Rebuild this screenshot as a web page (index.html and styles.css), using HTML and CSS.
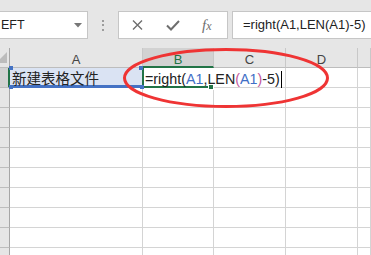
FILE: index.html
```html
<!DOCTYPE html>
<html>
<head>
<meta charset="utf-8">
<link rel="stylesheet" href="styles.css">
</head>
<body>
<div class="toolbar">
  <div class="namebox"><span>EFT</span><svg class="dd" width="8" height="5" viewBox="0 0 8 5"><polygon points="0,0 8,0 4,4.5" fill="#777"/></svg></div>
  <div class="grip"><i></i><i></i><i></i></div>
  <div class="fbtns">
    <svg class="ic-x" width="11" height="10" viewBox="0 0 11 10"><path d="M1 0.5 L10 9.5 M10 0.5 L1 9.5" stroke="#6e6e6e" stroke-width="1.4" fill="none"/></svg>
    <svg class="ic-ok" width="14" height="11" viewBox="0 0 14 11"><path d="M1 5.5 L5 9.5 L13 1" stroke="#6e6e6e" stroke-width="2" fill="none"/></svg>
    <span class="fx">f<span class="fx-x">x</span></span>
  </div>
  <div class="finput">=right(A1,LEN(A1)-5)</div>
</div>
<div class="sheet">
  <div class="corner"><svg width="9" height="19" viewBox="0 0 9 19"><polygon points="7,4 7,15 -4,15" fill="#bcbcbc"/></svg></div>
  <div class="ch">A</div><div class="ch ch-sel">B</div><div class="ch">C</div><div class="ch">D</div><div class="ch"></div>

  <div class="rh rh-sel"></div>
  <div class="cell a1">新建表格文件<span class="h h-tl"></span><span class="h h-tr"></span><span class="h h-bl"></span><span class="h h-br"></span></div>
  <div class="cell b1">=right(<span class="ref">A1</span>,LEN<span class="par">(</span><span class="ref">A1</span><span class="par">)</span>-5)<span class="caret"></span><span class="gh"></span></div>
  <div class="cell"></div><div class="cell"></div><div class="cell"></div>

  <div class="rh"></div><div class="cell"></div><div class="cell"></div><div class="cell"></div><div class="cell"></div><div class="cell"></div>
  <div class="rh"></div><div class="cell"></div><div class="cell"></div><div class="cell"></div><div class="cell"></div><div class="cell"></div>
  <div class="rh"></div><div class="cell"></div><div class="cell"></div><div class="cell"></div><div class="cell"></div><div class="cell"></div>
  <div class="rh"></div><div class="cell"></div><div class="cell"></div><div class="cell"></div><div class="cell"></div><div class="cell"></div>
  <div class="rh"></div><div class="cell"></div><div class="cell"></div><div class="cell"></div><div class="cell"></div><div class="cell"></div>
  <div class="rh"></div><div class="cell"></div><div class="cell"></div><div class="cell"></div><div class="cell"></div><div class="cell"></div>
  <div class="rh"></div><div class="cell"></div><div class="cell"></div><div class="cell"></div><div class="cell"></div><div class="cell"></div>
  <div class="rh"></div><div class="cell"></div><div class="cell"></div><div class="cell"></div><div class="cell"></div><div class="cell"></div>
  <div class="rh"></div><div class="cell"></div><div class="cell"></div><div class="cell"></div><div class="cell"></div><div class="cell"></div>
</div>
<svg class="mark" width="371" height="255" viewBox="0 0 371 255"><ellipse cx="226" cy="78" rx="101.5" ry="28.5" fill="none" stroke="#ef3434" stroke-width="3"/></svg>
</body>
</html>
```
FILE: styles.css
```css
* { box-sizing: border-box; }
html, body { margin: 0; padding: 0; }
body {
  width: 371px;
  height: 255px;
  overflow: hidden;
  position: relative;
  background: #fff;
  font-family: "Liberation Sans", Arial, sans-serif;
  color: #222;
}

.toolbar {
  display: flex;
  align-items: flex-start;
  height: 48px;
  padding-top: 11px;
  background: #e6e6e6;
}
.namebox {
  width: 91px;
  margin-left: -3px;
  height: 28px;
  background: #fff;
  border: 1px solid #c6c6c6;
  display: flex;
  align-items: center;
  justify-content: space-between;
  padding: 0 5px 0 3px;
  font-size: 12.5px;
  line-height: 26px;
}
.dd { display: block; }
.grip {
  width: 30px;
  height: 28px;
  display: flex;
  flex-direction: column;
  align-items: center;
  justify-content: center;
  gap: 2.5px;
}
.grip i { display: block; width: 2px; height: 2px; background: #9c9c9c; }
.fbtns {
  width: 110px;
  height: 28px;
  background: #fff;
  border: 1px solid #c6c6c6;
  display: flex;
  align-items: center;
  padding-left: 13px;
}
.ic-x { display: block; }
.ic-ok { display: block; margin-left: 23px; }
.fx {
  margin-left: 22px;
  font-family: "Liberation Serif", serif;
  font-style: italic;
  font-size: 15px;
  line-height: 26px;
  color: #6e6e6e;
}
.fx-x { font-size: 12px; }
.finput {
  flex: 1;
  margin-left: 4px;
  margin-right: -5px;
  height: 28px;
  background: #fff;
  border: 1px solid #c6c6c6;
  padding-left: 10px;
  font-size: 13px;
  line-height: 26px;
  white-space: nowrap;
}

.sheet {
  display: grid;
  grid-template-columns: 10px 133px 71px 72px 72px 1fr;
  grid-auto-rows: 20px;
  height: 207px;
  overflow: hidden;
}
.corner {
  background: #e6e6e6;
  border-right: 1px solid #a6a6a6;
  border-bottom: 1px solid #bdbdbd;
}
.corner svg { display: block; }
.ch {
  background: #e6e6e6;
  border-right: 1px solid #c8c8c8;
  border-bottom: 1px solid #bdbdbd;
  text-align: center;
  font-size: 13px;
  line-height: 17px;
  padding-top: 3px;
  color: #444;
}
.ch-sel {
  background: #d2d2d2;
  border-bottom: 2px solid #217346;
  color: #217346;
}
.rh {
  background: #e6e6e6;
  border-right: 1px solid #a6a6a6;
  border-bottom: 1px solid #bdbdbd;
}
.rh-sel {
  background: #d2d2d2;
  border-right: 2px solid #217346;
}
.cell {
  border-right: 1px solid #d4d4d4;
  border-bottom: 1px solid #d4d4d4;
}
.a1 {
  position: relative;
  z-index: 2;
  background: #dae3f3;
  border-right-color: #217346;
  border-bottom-color: #4472c4;
  box-shadow: inset 0 -2px 0 #4472c4;
  font-family: "Noto Sans CJK SC", sans-serif;
  font-size: 14.5px;
  line-height: 16px;
  padding: 2px 0 0 2px;
  white-space: nowrap;
  color: #222;
}
.h { position: absolute; width: 4px; height: 4px; background: #4472c4; }
.h-tl { left: -1px; top: -2px; }
.h-tr { left: 129px; top: -2px; }
.h-bl { left: -1px; top: 17px; }
.h-br { left: 130px; top: 17px; }
.b1 {
  position: relative;
  z-index: 1;
  border-right-color: #fff;
  border-bottom-color: #217346;
  box-shadow: inset 1px 0 0 #217346, inset 0 -1px 0 #217346;
  white-space: nowrap;
  font-size: 14.3px;
  line-height: 16px;
  padding: 3px 0 0 2px;
  color: #222;
}
.ref { color: #3f6fc6; }
.par { color: #c2579c; }
.caret {
  display: inline-block;
  width: 1px;
  height: 17px;
  background: #000;
  vertical-align: -4px;
  margin-left: 1px;
}
.gh {
  position: absolute;
  left: 65px;
  top: 16px;
  width: 6px;
  height: 6px;
  background: #217346;
  border: 1px solid #fff;
}
.mark {
  position: absolute;
  left: 0;
  top: 0;
  pointer-events: none;
  z-index: 5;
}
```
